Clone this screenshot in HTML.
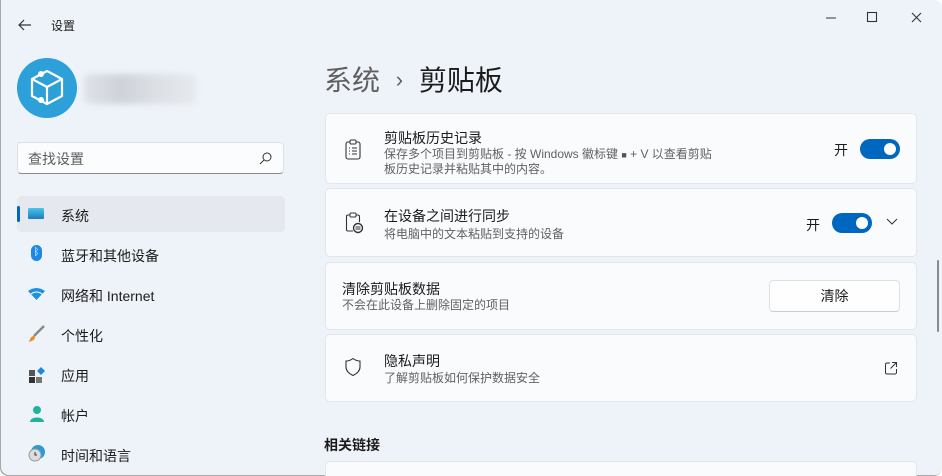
<!DOCTYPE html>
<html><head><meta charset="utf-8"><style>
*{margin:0;padding:0;box-sizing:border-box}
body{width:942px;height:476px;overflow:hidden;background:#fff;font-family:"Liberation Sans","Noto Sans CJK SC",sans-serif;color:#1b1b1b}
.win{position:absolute;left:0;top:0;width:942px;height:476px;background:#eef3f9;box-shadow:inset 1px -1px 0 #a8a8a8;border-radius:0 8px 8px 8px;overflow:hidden}
.abs{position:absolute}
.nav{position:absolute;left:61px;font-size:14px}
.ico{position:absolute;left:28px}
.card{position:absolute;left:325px;width:592px;background:#fafbfd;border:1px solid #e3e6ea;border-radius:5px}
.t{position:absolute;font-size:14px;color:#1b1b1b}
.s{position:absolute;font-size:12px;color:#616161;line-height:14px}
.tog{position:absolute;width:40px;height:20px;border-radius:10px;background:#0067c0}
.tog::after{content:"";position:absolute;right:4px;top:4px;width:12px;height:12px;border-radius:50%;background:#fff}
</style></head><body><div class="win">
<svg class="abs" style="left:17px;top:17px" width="16" height="16"><path d="M14 8H2M7 3L2 8l5 5" stroke="#333" stroke-width="1.2" fill="none"/></svg>
<div class="abs" style="left:51px;top:17px;font-size:12px">设置</div>
<svg class="abs" style="left:826px;top:10px" width="100" height="16"><path d="M0 8h10" stroke="#333"/><rect x="41.5" y="2.5" width="9" height="9" fill="none" stroke="#333" stroke-width="1.1"/><path d="M86 3l9 9M95 3l-9 9" stroke="#333" stroke-width="1.1"/></svg>
<div class="abs" style="left:17px;top:58px;width:60px;height:60px;border-radius:50%;background:#2d9fd9"></div>
<svg class="abs" style="left:17px;top:58px" width="60" height="60"><path d="M30 13l15 8v17l-15 8-15-8V21zM15 21l15 8 15-8M30 29v17" stroke="#fff" stroke-width="2.2" fill="none" stroke-linejoin="round"/><circle cx="24" cy="16" r="3" fill="#fff"/><circle cx="24" cy="42" r="3" fill="#fff"/></svg>
<div class="abs" style="left:84px;top:74px;width:112px;height:30px;background:linear-gradient(90deg,#dfe3e8,#cfd3d9,#dde1e6,#e6e9ed);filter:blur(3px);border-radius:6px"></div>
<div class="abs" style="left:17px;top:142px;width:267px;height:32px;background:#fbfcfe;border:1px solid #dde1e5;border-bottom-color:#8a8a8a;border-radius:4px"></div>
<div class="abs" style="left:28px;top:149px;font-size:14px;color:#5d5d5d">查找设置</div>
<svg class="abs" style="left:259px;top:151px" width="14" height="14"><circle cx="8" cy="6" r="4" stroke="#333" fill="none"/><path d="M5 9l-4 4" stroke="#333"/></svg>
<div class="abs" style="left:17px;top:196px;width:268px;height:36px;background:#e5e9ef;border-radius:5px"></div>
<div class="abs" style="left:17px;top:206px;width:3px;height:16px;background:#0067c0;border-radius:2px"></div>
<div class="ico" style="top:208px;width:16px;height:11px;background:linear-gradient(#4cc3ec,#1a7fb8);border-radius:1px"></div>
<div class="nav" style="top:206px">系统</div>
<div class="ico" style="left:31px;top:245px;width:11px;height:16px;background:#1e88e5;border-radius:6px;color:#fff;font-size:10px;text-align:center;line-height:16px">ᛒ</div>
<div class="nav" style="top:246px">蓝牙和其他设备</div>
<svg class="ico" style="top:288px" width="17" height="13"><path d="M0 3Q8.5-3 17 3L8.5 12z" fill="#1e8fe0"/><path d="M3 6Q8.5 2 14 6" stroke="#fff" stroke-width="1" fill="none"/></svg>
<div class="nav" style="top:286px">网络和 Internet</div>
<svg class="ico" style="top:325px" width="18" height="18"><path d="M16 1L6 11" stroke="#888" stroke-width="2.5"/><path d="M6 11c-3 0-4 3-5 6 3-1 6-2 6-5z" fill="#f08a24"/></svg>
<div class="nav" style="top:326px">个性化</div>
<svg class="ico" style="top:366px" width="18" height="18"><rect x="1" y="4" width="6" height="6" fill="#555"/><rect x="1" y="11" width="6" height="6" fill="#333"/><rect x="8" y="11" width="6" height="6" fill="#777"/><path d="M13 1l4 4-4 4-4-4z" fill="#1e88e5"/></svg>
<div class="nav" style="top:366px">应用</div>
<svg class="ico" style="top:405px" width="18" height="18"><circle cx="9" cy="5" r="4" fill="#20b39c"/><path d="M2 17c0-6 14-6 14 0z" fill="#20b39c"/></svg>
<div class="nav" style="top:406px">帐户</div>
<svg class="ico" style="top:444px" width="18" height="18"><circle cx="10" cy="8" r="7" fill="#2a9ad8"/><circle cx="7" cy="11" r="6" fill="#ddd" stroke="#999"/><path d="M7 8v3h2" stroke="#333" fill="none"/></svg>
<div class="nav" style="top:446px">时间和语言</div>

<div class="abs" style="left:324px;top:59px;font-size:28px;color:#5f5f5f">系统 <span style="font-size:22px;position:relative;top:-3px;margin:0 8px">›</span> <span style="color:#1b1b1b">剪贴板</span></div>

<div class="card" style="top:113px;height:71px"></div>
<svg class="abs" style="left:344px;top:139px" width="18" height="22"><rect x="2" y="3" width="14" height="17" rx="2" fill="none" stroke="#333" stroke-width="1.1"/><rect x="6" y="1" width="6" height="4" rx="1" fill="#fafbfd" stroke="#333"/><path d="M5 9h1M5 12h1M5 15h1M8 9h5M8 12h5M8 15h5" stroke="#333"/></svg>
<div class="t" style="left:384px;top:128px">剪贴板历史记录</div>
<div class="s" style="left:384px;top:147px">保存多个项目到剪贴板 - 按 Windows 徽标键 <span style="font-size:9px;color:#555">■</span> + V 以查看剪贴<br>板历史记录并粘贴其中的内容。</div>
<div class="t" style="left:834px;top:140px">开</div>
<div class="tog" style="left:860px;top:139px"></div>

<div class="card" style="top:188px;height:69px"></div>
<svg class="abs" style="left:344px;top:212px" width="22" height="22"><path d="M9 19H4a1.5 1.5 0 0 1-1.5-1.5v-13A1.5 1.5 0 0 1 4 3h10a1.5 1.5 0 0 1 1.5 1.5V10" fill="none" stroke="#333" stroke-width="1.1"/><rect x="6" y="1" width="6" height="4" rx="1" fill="#fafbfd" stroke="#333"/><circle cx="14" cy="16" r="4.5" fill="none" stroke="#333" stroke-width="1.4"/><path d="M11.5 15h5M11.5 17h5" stroke="#333"/></svg>
<div class="t" style="left:384px;top:206px">在设备之间进行同步</div>
<div class="s" style="left:384px;top:227px">将电脑中的文本粘贴到支持的设备</div>
<div class="t" style="left:806px;top:215px">开</div>
<div class="tog" style="left:832px;top:213px"></div>
<svg class="abs" style="left:886px;top:218px" width="12" height="8"><path d="M1 1l5 5 5-5" stroke="#333" fill="none"/></svg>

<div class="card" style="top:262px;height:68px"></div>
<div class="t" style="left:342px;top:279px">清除剪贴板数据</div>
<div class="s" style="left:342px;top:298px">不会在此设备上删除固定的项目</div>
<div class="abs" style="left:769px;top:280px;width:131px;height:32px;background:#fefefe;border:1px solid #e0e0e0;border-bottom-color:#ccc;border-radius:4px;font-size:14px;text-align:center;line-height:30px">清除</div>

<div class="card" style="top:334px;height:68px"></div>
<svg class="abs" style="left:344px;top:357px" width="18" height="20"><path d="M9 1.5c2.5 2 5 2.5 7 2.5v6c0 4-3 6.5-7 8.5-4-2-7-4.5-7-8.5V4c2 0 4.5-.5 7-2.5z" fill="none" stroke="#333" stroke-width="1.1"/></svg>
<div class="t" style="left:384px;top:351px">隐私声明</div>
<div class="s" style="left:384px;top:371px">了解剪贴板如何保护数据安全</div>
<svg class="abs" style="left:884px;top:361px" width="14" height="14"><path d="M6 2H3a1.5 1.5 0 0 0-1.5 1.5v8A1.5 1.5 0 0 0 3 13h8a1.5 1.5 0 0 0 1.5-1.5V8M8 1.5h4.5V6M12.5 1.5L6.5 7.5" stroke="#333" fill="none"/></svg>

<div class="abs" style="left:324px;top:435px;font-size:14px;font-weight:bold">相关链接</div>
<div class="card" style="top:461px;height:30px"></div>
<div class="abs" style="left:937px;top:260px;width:2px;height:72px;background:#8a8a8a;border-radius:1px"></div>
</div></body></html>
